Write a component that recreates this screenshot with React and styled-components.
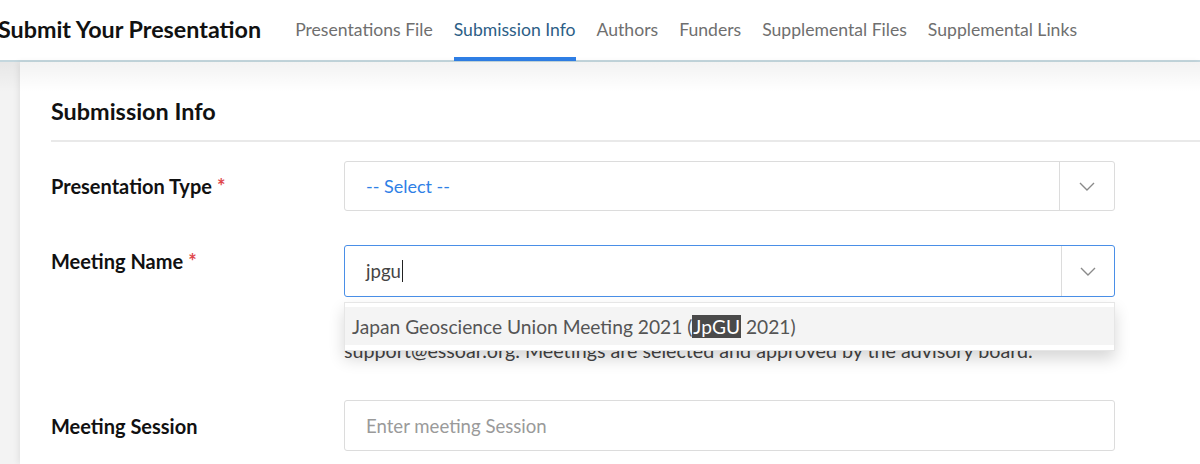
import styled, { createGlobalStyle } from "styled-components";

const GlobalStyle = createGlobalStyle`
  body {
    margin: 0;
    background: #fff;
    font-family: Lato, "Noto Sans", "Liberation Sans", sans-serif;
  }
`;

const TABS = [
  "Presentations File",
  "Submission Info",
  "Authors",
  "Funders",
  "Supplemental Files",
  "Supplemental Links",
];

const Page = styled.div`
  width: 1200px;
  height: 464px;
  overflow: hidden;
  display: flex;
  flex-direction: column;
`;

const Header = styled.header`
  height: 60px;
  display: flex;
  align-items: stretch;
  border-bottom: 2px solid #c4d7de;
`;

const Title = styled.h1`
  margin: 0 34px 0 -2px;
  align-self: center;
  font-size: 23.3px;
  font-weight: 700;
  color: #111;
  padding-bottom: 3px;
`;

const Tabs = styled.nav`
  display: flex;
  gap: 21px;
`;

const Tab = styled.a`
  display: flex;
  align-items: center;
  padding-top: 2px;
  font-size: 17.6px;
  color: ${(p) => (p.$active ? "#2c5e86" : "#6f6f6f")};
  border-bottom: 4px solid ${(p) => (p.$active ? "#2f7fe6" : "transparent")};
  margin-bottom: -1px;
`;

const Body = styled.div`
  flex: 1;
  display: flex;
  background: #f3f3f3;
  position: relative;
  &::after {
    content: "";
    position: absolute;
    left: 0;
    right: 0;
    top: 0;
    height: 30px;
    background: linear-gradient(rgba(0, 0, 0, 0.05), rgba(0, 0, 0, 0));
    pointer-events: none;
  }
`;

const Card = styled.section`
  margin-left: 20px;
  flex: 1;
  background: #fff;
  box-shadow: -2px 0 6px rgba(0, 0, 0, 0.07);
  padding: 34px 0 0 31px;
`;

const CardTitle = styled.h2`
  margin: 0;
  font-size: 23.4px;
  font-weight: 700;
  color: #111;
  line-height: 30px;
  padding-bottom: 14px;
  border-bottom: 2px solid #e9e9e9;
`;

const Form = styled.div`
  padding-top: 19px;
  display: flex;
  flex-direction: column;
`;

const Row = styled.div`
  display: flex;
  align-items: ${(p) => (p.$top ? "flex-start" : "center")};
  margin-top: ${(p) => p.$gap || 0}px;
`;

const Label = styled.label`
  width: 293px;
  flex: none;
  font-size: 20px;
  font-weight: 700;
  color: #111;
  padding-top: ${(p) => p.$pad || 0}px;
`;

const Required = styled.span`
  color: #e0474c;
  margin-left: 5px;
`;

const Field = styled.div`
  width: 771px;
`;

const Combo = styled.div`
  position: relative;
`;

const Control = styled.div`
  height: ${(p) => p.$h || 50}px;
  box-sizing: border-box;
  display: flex;
  align-items: stretch;
  border: 1px solid ${(p) => (p.$focus ? "#4a8fe7" : "#dcdcdc")};
  border-radius: 3px;
  background: #fff;
`;

const Value = styled.div`
  flex: 1;
  display: flex;
  align-items: center;
  padding-left: 21px;
  font-size: ${(p) => p.$size || 18.6}px;
  color: ${(p) => p.$color || "#444"};
`;

const Caret = styled.span`
  display: inline-block;
  width: 1px;
  height: 22px;
  background: #222;
  margin-left: 1px;
`;

const ArrowBox = styled.div`
  width: ${(p) => p.$w || 54}px;
  border-left: 1px solid #dcdcdc;
  display: flex;
  align-items: center;
  justify-content: center;
`;

const Menu = styled.ul`
  position: absolute;
  left: 0;
  right: 0;
  top: calc(100% + 5px);
  margin: 0;
  padding: 4px 0 5px;
  list-style: none;
  background: #fff;
  border: 1px solid #e6e6e6;
  box-shadow: 0 8px 16px rgba(0, 0, 0, 0.16);
  z-index: 2;
`;

const Option = styled.li`
  height: 38px;
  display: flex;
  align-items: center;
  padding-left: 7px;
  font-size: 19.2px;
  color: #555;
  white-space: pre;
  background: ${(p) => (p.$hover ? "#f4f4f4" : "#fff")};
`;

const Match = styled.mark`
  background: #4a4a4a;
  color: #fff;
  padding: 0 1px;
`;

const Help = styled.p`
  margin: 10px 0 0;
  font-size: 19.7px;
  line-height: 29px;
  color: #444;
`;

const Chevron = () => (
  <svg width="16" height="9" viewBox="0 0 16 9" fill="none">
    <polyline points="1,1 8,8 15,1" stroke="#8a8a8a" strokeWidth="1.4" />
  </svg>
);

export default function App() {
  return (
    <Page>
      <GlobalStyle />
      <Header>
        <Title>Submit Your Presentation</Title>
        <Tabs>
          {TABS.map((t) => (
            <Tab key={t} $active={t === "Submission Info"}>
              {t}
            </Tab>
          ))}
        </Tabs>
      </Header>
      <Body>
        <Card>
          <CardTitle>Submission Info</CardTitle>
          <Form>
            <Row>
              <Label>
                Presentation Type<Required>*</Required>
              </Label>
              <Field>
                <Control>
                  <Value $color="#2f7fe6" $size={18}>
                    -- Select --
                  </Value>
                  <ArrowBox>
                    <Chevron />
                  </ArrowBox>
                </Control>
              </Field>
            </Row>
            <Row $top $gap={34}>
              <Label $pad={4}>
                Meeting Name<Required>*</Required>
              </Label>
              <Field>
                <Combo>
                  <Control $focus $h={52}>
                    <Value>
                      jpgu
                      <Caret />
                    </Value>
                    <ArrowBox $w={52}>
                      <Chevron />
                    </ArrowBox>
                  </Control>
                  <Menu>
                    <Option $hover>
                      {"Japan Geoscience Union Meeting 2021 ("}
                      <Match>JpGU</Match>
                      {" 2021)"}
                    </Option>
                  </Menu>
                </Combo>
                <Help>
                  Start typing to find your meeting. If it is not listed, write to
                  <br />
                  support@essoar.org. Meetings are selected and approved by the
                  advisory board.
                </Help>
              </Field>
            </Row>
            <Row $gap={35}>
              <Label>Meeting Session</Label>
              <Field>
                <Control $h={51}>
                  <Value $color="#9a9a9a">Enter meeting Session</Value>
                </Control>
              </Field>
            </Row>
          </Form>
        </Card>
      </Body>
    </Page>
  );
}
